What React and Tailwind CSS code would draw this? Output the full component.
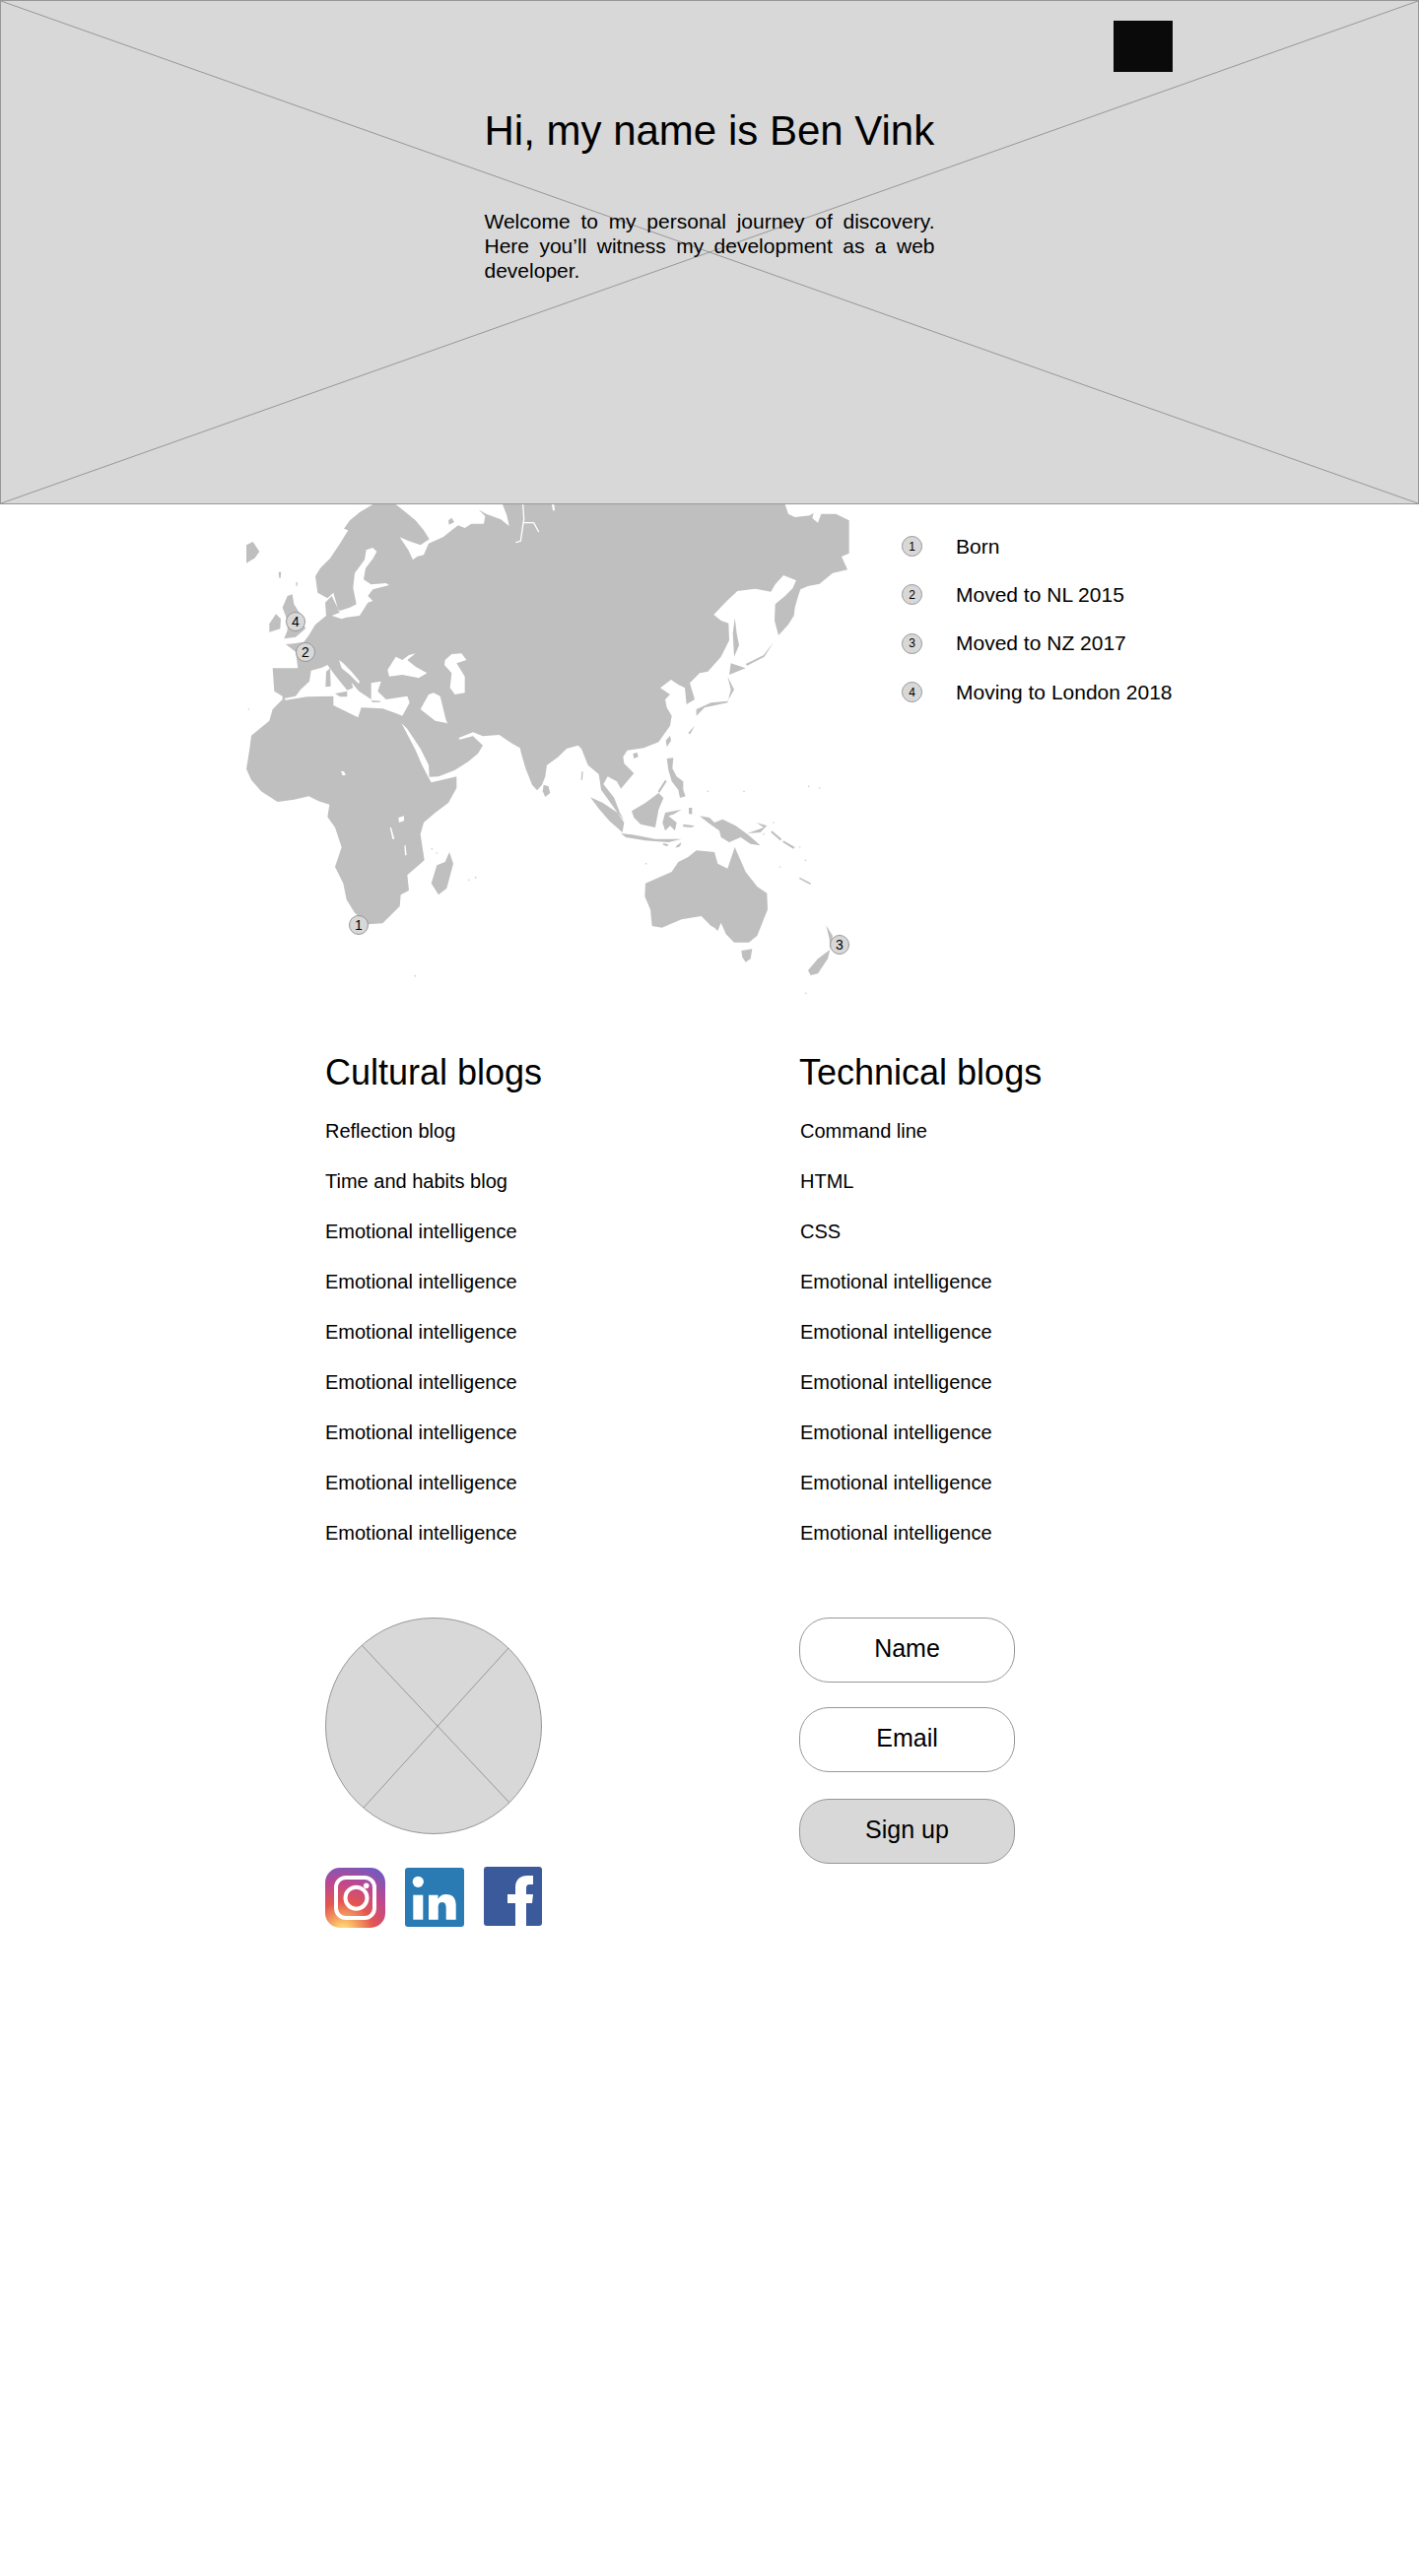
// map outlines are in 3x page units, measured from (245, 510)
const land = `M400 6 L470 6 500 30 530 55 555 85 572 112 545 130 510 118 482 106 508 145 522 175 535 165 555 160 570 125 600 112 615 105 640 85 660 70 680 78 700 65 738 65 742 42 722 22 745 35 790 52 815 72 808 40 795 6
L1655 6 1665 35 1685 45 1730 40 1742 32 1738 48 1755 62 1765 35 1810 35 1850 55 1850 155 1827 165 1845 205 1800 215 1760 248 1725 255 1702 265 1695 285 1685 320 1682 345 1665 372 1635 405 1623 360 1625 310 1655 285 1678 262 1702 208 1690 238 1650 222 1625 250 1612 272 1565 263 1510 270 1478 300 1438 342 1460 360 1483 368 1485 420 1460 470 1420 515 1395 520 1365 550 1380 600 1355 615 1350 565 1330 555 1308 540 1275 565 1305 585 1290 600 1295 625 1310 650 1305 680 1270 730 1225 748 1175 755
L1162 775 1165 795 1195 825 1155 872 1143 850 1115 835 1102 858 1135 900 1152 945 1165 968 1145 945 1095 875 1088 828 1055 800 1035 750 1025 740 990 750 965 775 930 800 925 835 915 860 900 877 885 860 865 810 852 765 848 748 825 735 785 708 735 712 705 700 660 718 630 680 622 660 605 590 585 580 570 585 545 630 590 665 625 672 650 705 665 722 705 712 735 740 720 765 690 790 650 815 600 835 572 836 570 800 545 750 505 690 487 672 528 750 550 800 572 842 578 853 655 835
L655 870 630 915 590 945 555 975 545 1010 557 1090 505 1135 510 1182 485 1195 482 1230 430 1282 385 1285 345 1250 320 1210 310 1160 285 1110 305 1050 285 990 262 958 268 920 235 910 205 895 160 905 110 912 60 880 30 845 15 812 25 750 30 710 85 665 95 630 125 600 125 590 100 575 95 505 172 505 165 455 135 432 160 430 190 425 205 405 225 372 258 345 255 305 275 285 293 322 280 275 262 292 232 275 225 225 240 200 270 170 300 125 325 85 312 80 330 55 360 30Z`;

const seas = [
  'M130 597 165 590 180 570 207 545 212 512 245 503 262 495 280 520 300 545 322 572 340 565 335 548 358 575 395 600 395 550 425 545 415 575 440 600 505 590 512 610 490 650 470 642 430 628 365 625 355 655 280 618 280 590 200 592 135 602Z',
  'M297 480 310 490 335 515 360 545 357 552 330 525 305 505Z',
  'M445 510 470 470 490 480 510 465 530 460 505 480 530 500 565 520 540 535 490 525 450 530Z',
  'M620 480 640 462 670 460 685 480 655 490 680 530 680 580 650 585 635 565 640 520 618 495Z',
  'M292 325 300 335 275 345 305 355 320 350 360 345 385 305 400 300 385 285 400 265 450 252 440 246 395 250 372 235 378 200 400 172 412 150 400 138 380 145 375 175 345 215 340 260 350 310 330 320 300 330Z',
  'M478 960 495 955 495 970 480 975Z',
  'M303 818 312 820 318 830 308 832Z',
  'M452 990 456 990 466 1025 460 1025Z',
  'M496 1045 500 1045 503 1075 498 1075Z',
  'M945 6 952 6 954 25 948 25Z',
];

const islands = [
  'M140 285 155 280 160 310 185 350 195 385 165 410 130 415 140 390 140 360 125 320Z',
  'M85 370 105 340 120 355 118 385 85 395Z',
  'M15 130 35 120 55 150 40 170 15 185Z',
  'M113 212 121 212 119 230 115 230Z',
  'M166 243 170 243 170 255 167 255Z',
  'M630 55 640 47 648 60 632 68Z',
  'M258 515 270 505 272 560 256 562Z',
  'M285 582 322 575 322 592 300 592Z',
  'M395 603 425 605 420 609 398 608Z',
  'M633 1065 645 1100 625 1175 600 1195 578 1160 595 1105 620 1095Z',
  'M920 860 935 865 940 885 925 897 917 880Z',
  'M1062 898 1100 915 1145 945 1165 975 1160 1005 1120 970 1090 935Z',
  'M1155 1008 1190 1012 1260 1025 1340 1025 1300 1035 1230 1030 1170 1020Z',
  'M1188 940 1230 915 1270 885 1285 900 1270 935 1260 990 1215 980 1195 960Z',
  'M1290 945 1340 935 1315 950 1300 955 1325 975 1320 1000 1305 985 1290 1000 1282 975Z',
  'M1395 955 1425 960 1440 975 1465 965 1505 985 1540 1010 1580 1045 1550 1040 1520 1020 1485 1035 1460 1020 1455 1000 1420 975Z',
  'M1295 780 1315 778 1312 810 1325 835 1345 850 1345 875 1352 895 1335 900 1330 875 1310 850 1300 815Z',
  'M1268 880 1290 845 1295 850 1272 885Z',
  'M1362 930 1372 930 1372 950 1362 948Z',
  'M1286 1038 1300 1042 1296 1048 1282 1042Z',
  'M1325 1045 1340 1035 1335 1048 1322 1052Z',
  'M1345 980 1380 985 1370 990 1345 988Z',
  'M1568 975 1600 985 1580 1005 1540 1008 1590 990Z',
  'M1615 1000 1645 1025 1640 1030 1612 1005Z',
  'M1650 1030 1685 1050 1680 1055 1648 1035Z',
  'M1700 1142 1735 1160 1730 1163 1698 1146Z',
  'M1036 820 1040 820 1038 845 1034 845Z',
  'M1305 710 1308 725 1295 745 1292 725Z',
  'M1192 765 1205 762 1208 775 1195 780Z',
  'M1230 1160 1310 1125 1330 1095 1360 1080 1385 1060 1440 1065 1450 1100 1480 1115 1502 1050 1535 1125 1570 1170 1600 1190 1602 1240 1570 1320 1545 1340 1500 1340 1475 1315 1460 1280 1450 1305 1440 1295 1430 1290 1400 1260 1340 1270 1280 1295 1250 1290 1245 1240 1228 1200Z',
  'M1522 1365 1555 1360 1550 1390 1535 1400 1525 1385Z',
  'M1792 1362 1785 1390 1755 1435 1733 1440 1725 1425 1755 1390Z',
  'M1780 1288 1800 1320 1792 1360 1790 1330Z',
  'M1502 352 1496 400 1500 470 1515 435 1508 400Z',
  'M1490 490 1535 505 1485 525Z',
  'M1480 530 1500 570 1480 605 1430 610 1385 630 1385 650 1410 625 1480 610 1490 570Z',
  'M1535 492 1590 465 1620 425 1592 470 1540 497Z',
  'M1360 702 1380 680 1366 706Z',
];

const dots = [[22, 630], [1232, 1100], [1640, 1110], [529, 1442], [692, 1150], [713, 1142], [580, 1055], [595, 1068], [1718, 1495], [1717, 1090], [1420, 880], [1530, 880], [1727, 865], [1760, 870], [1700, 1050], [1620, 975], [1590, 1010]];

function Marker({ n, className }) {
  return (
    <span className={`absolute flex h-5 w-5 items-center justify-center rounded-full border border-[#979797] bg-[#d8d8d8] text-sm ${className}`}>
      {n}
    </span>
  );
}

function WorldMap() {
  return (
    <div className="relative h-[500px] w-[620px] shrink-0">
      <svg viewBox="0 6 1860 1500" className="block h-full w-full">
        <path d={land} fill="#bfbfbf" />
        {seas.map((d) => <path key={d} d={d} fill="#fff" />)}
        <path d="M857 6 860 50 850 118 835 122M860 62 890 62 905 90" fill="none" stroke="#fff" strokeWidth="4" />
        {islands.map((d) => <path key={d} d={d} fill="#bfbfbf" />)}
        {dots.map(([x, y]) => <circle key={`${x}-${y}`} cx={x} cy={y} r="2.5" fill="#cfcfcf" />)}
      </svg>
      <Marker n="4" className="left-[45px] top-[109px]" />
      <Marker n="2" className="left-[55px] top-[140px]" />
      <Marker n="1" className="left-[109px] top-[417px]" />
      <Marker n="3" className="left-[597px] top-[437px]" />
    </div>
  );
}

const moves = ['Born', 'Moved to NL 2015', 'Moved to NZ 2017', 'Moving to London 2018'];
const cultural = ['Reflection blog', 'Time and habits blog', ...Array(7).fill('Emotional intelligence')];
const technical = ['Command line', 'HTML', 'CSS', ...Array(6).fill('Emotional intelligence')];

function BlogColumn({ title, items, listClassName = '' }) {
  return (
    <div>
      <h2 className="text-[36px] leading-[44px]">{title}</h2>
      <ul className={`mt-[11px] ${listClassName}`}>
        {items.map((item, i) => (
          <li key={i} className="flex h-[51px] items-center text-[20px]">{item}</li>
        ))}
      </ul>
    </div>
  );
}

function Instagram() {
  return (
    <svg viewBox="0 0 61 61" className="h-[61px] w-[61px] shrink-0">
      <defs>
        <radialGradient id="ig" cx="30%" cy="107%" r="120%">
          <stop offset="0" stopColor="#fdf08f" />
          <stop offset="0.12" stopColor="#fbc56a" />
          <stop offset="0.42" stopColor="#e4564f" />
          <stop offset="0.68" stopColor="#c0478f" />
          <stop offset="1" stopColor="#6a5cc4" />
        </radialGradient>
      </defs>
      <rect width="61" height="61" rx="15" fill="url(#ig)" />
      <rect x="11" y="10" width="39" height="41" rx="10" fill="none" stroke="#fff" strokeWidth="4" />
      <circle cx="31.5" cy="30.7" r="11" fill="none" stroke="#fff" strokeWidth="4" />
      <circle cx="41.7" cy="18.3" r="2.8" fill="#fff" />
    </svg>
  );
}

function LinkedIn() {
  return (
    <svg viewBox="0 0 60 60" className="h-[60px] w-[60px] shrink-0">
      <rect width="60" height="60" rx="3" fill="#2a7bb4" />
      <circle cx="13.3" cy="14.3" r="5.6" fill="#fff" />
      <rect x="8.3" y="27.7" width="10" height="25" fill="#fff" />
      <path d="M24 27.7h9.5v4c1.5-2.6 4.5-4.6 8-4.6 7.5 0 10.2 4.5 10.2 11v14.6h-10V41c0-3-.6-6-4-6-3.5 0-4 2.8-4 6v11.7H24Z" fill="#fff" />
    </svg>
  );
}

function Facebook() {
  return (
    <svg viewBox="0 0 59 60" className="-mt-px h-[60px] w-[59px] shrink-0">
      <rect width="59" height="60" rx="3" fill="#3b5a9b" />
      <path d="M32 60V37h-8v-9h8v-7c0-8 5-12 12-12h6v9h-4c-2 0-3 1-3 4v6h7l-1 9h-6v23Z" fill="#fff" />
    </svg>
  );
}

function Pill({ children, filled, className = '' }) {
  return (
    <div className={`flex h-[66px] w-[219px] items-center justify-center rounded-[30px] border border-[#979797] pb-[2px] text-[25px] ${filled ? 'bg-[#d8d8d8]' : 'bg-white'} ${className}`}>
      {children}
    </div>
  );
}

export default function App() {
  return (
    <div className="min-h-[2615px] bg-white font-['Liberation_Sans',Arial,sans-serif] text-black">
      <header className="relative h-[512px] border border-[#979797] bg-[#d8d8d8]">
        <svg viewBox="0 0 1438 510" preserveAspectRatio="none" className="absolute inset-0 h-full w-full">
          <path d="M0 0 1438 510M1438 0 0 510" stroke="#979797" strokeWidth="1" fill="none" />
        </svg>
        <span className="absolute left-[1129px] top-5 h-[52px] w-[60px] bg-[#0a0a0a]" />
        <div className="relative mx-auto w-[457px] pt-[109px]">
          <h1 className="text-[42px] leading-[46px]">Hi, my name is Ben Vink</h1>
          <p className="mt-[56px] text-justify text-[21px] leading-[25px]">
            Welcome to my personal journey of discovery. Here you’ll witness my development as a web developer.
          </p>
        </div>
      </header>

      <section className="flex pl-[245px]">
        <WorldMap />
        <ul className="ml-[50px] pt-[18px]">
          {moves.map((move, i) => (
            <li key={move} className="flex h-[49.3px] items-center gap-[34px] text-[21px]">
              <span className="flex h-[21px] w-[21px] items-center justify-center rounded-full border border-[#979797] bg-[#d8d8d8] text-xs">{i + 1}</span>
              {move}
            </li>
          ))}
        </ul>
      </section>

      <section className="grid grid-cols-[481px_1fr] pl-[330px] pt-[55px]">
        <BlogColumn title="Cultural blogs" items={cultural} />
        <BlogColumn title="Technical blogs" items={technical} listClassName="pl-px" />
      </section>

      <section className="grid grid-cols-[481px_1fr] pl-[330px] pt-[61px]">
        <div>
          <svg viewBox="0 0 220 220" className="h-[220px] w-[220px]">
            <circle cx="110" cy="110" r="109.5" fill="#d8d8d8" stroke="#979797" />
            <path d="M37 28 187 188M186 31 39 193" stroke="#979797" fill="none" />
          </svg>
          <div className="mt-[34px] flex items-start gap-5">
            <Instagram />
            <LinkedIn />
            <Facebook />
          </div>
        </div>
        <div className="flex flex-col gap-[25px]">
          <Pill>Name</Pill>
          <Pill>Email</Pill>
          <Pill filled className="mt-[2px]">Sign up</Pill>
        </div>
      </section>
    </div>
  );
}
